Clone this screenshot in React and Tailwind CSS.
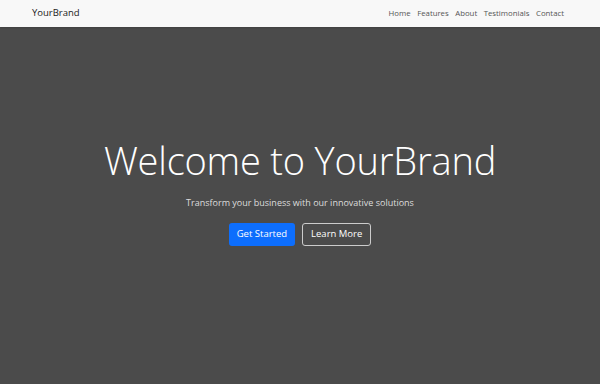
import React from 'react';

const links = ['Home', 'Features', 'About', 'Testimonials', 'Contact'];

export default function App() {
  return (
    <div className="flex flex-col h-[384px] w-full font-['Open_Sans',sans-serif]">
      {/* Navbar */}
      <nav className="h-[27px] shrink-0 bg-[#f8f8f8] flex items-center justify-between pl-[32px] pr-[36px] shadow-[0_1px_2px_rgba(0,0,0,0.15)] z-10">
        <span className="text-[9.5px] text-[#222]">YourBrand</span>
        <ul className="flex items-center gap-[6.5px]">
          {links.map((l) => (
            <li key={l} className="text-[7.8px] text-[#555]">{l}</li>
          ))}
        </ul>
      </nav>

      {/* Hero */}
      <section className="flex-1 bg-[#4b4b4b] flex flex-col items-center justify-center text-center pb-[24px]">
        <h1 className="text-[38px] font-light text-white leading-none tracking-[-0.2px]">Welcome to YourBrand</h1>
        <p className="mt-[17px] text-[9px] text-[#ddd]">Transform your business with our innovative solutions</p>
        <div className="mt-[13px] flex gap-[7px]">
          <button className="h-[23px] px-[8px] rounded-[3px] bg-[#0d6efd] text-white text-[9.5px]">Get Started</button>
          <button className="h-[23px] px-[8px] rounded-[3px] border border-[#ccc] text-white text-[9.5px]">Learn More</button>
        </div>
      </section>
    </div>
  );
}
